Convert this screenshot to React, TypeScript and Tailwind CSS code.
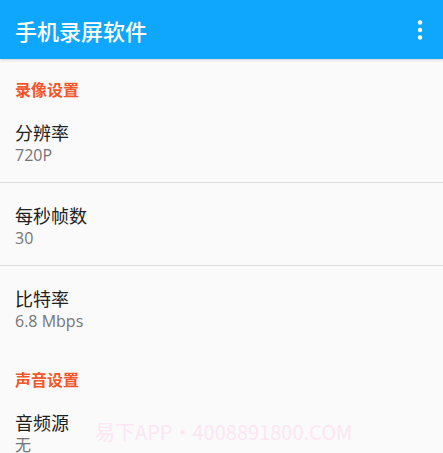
const font = { fontFamily: '"Noto Sans CJK SC", "Noto Sans", sans-serif' };
const valueFont = { fontFamily: '"Open Sans", "Noto Sans CJK SC", sans-serif' };

type Pref = { title: string; value: string; divider?: boolean };

const sections: { name: string; items: Pref[] }[] = [
  {
    name: "录像设置",
    items: [
      { title: "分辨率", value: "720P", divider: true },
      { title: "每秒帧数", value: "30", divider: true },
      { title: "比特率", value: "6.8 Mbps" },
    ],
  },
  {
    name: "声音设置",
    items: [{ title: "音频源", value: "无" }],
  },
];

function MoreIcon() {
  return (
    <svg width="6" height="20" viewBox="0 0 6 20" fill="white">
      <circle cx="3" cy="2.5" r="2.2" />
      <circle cx="3" cy="10" r="2.2" />
      <circle cx="3" cy="17.5" r="2.2" />
    </svg>
  );
}

export default function App() {
  return (
    <div
      className="relative h-[453px] w-[443px] overflow-hidden bg-[#fafafa]"
      style={font}
    >
      <header className="relative z-10 flex h-[59px] items-center justify-between bg-[#0fa6fe] pl-[15px] pr-[20px] shadow-[0_1px_3px_rgba(0,0,0,0.18)]">
        <h1 className="text-[22px] font-medium leading-none text-white">
          手机录屏软件
        </h1>
        <MoreIcon />
      </header>

      {sections.map((s) => (
        <section key={s.name}>
          <div className="h-[41px] pl-[15px] pt-[20px] text-[16px] font-bold leading-[20px] text-[#f4562a]">
            {s.name}
          </div>
          {s.items.map((p) => (
            <div
              key={p.title}
              className={`h-[83px] pl-[15px] pt-[20px] ${
                p.divider ? "border-b border-[#dddddd]" : ""
              }`}
            >
              <div className="text-[18px] leading-[24px] text-[#212121]">
                {p.title}
              </div>
              <div
                className="mt-[1px] text-[16px] leading-[20px] text-[#757575]"
                style={valueFont}
              >
                {p.value}
              </div>
            </div>
          ))}
        </section>
      ))}

      <div className="pointer-events-none absolute left-[95px] top-[420px] whitespace-nowrap text-[20px] leading-[24px] text-[#fde6f4]">
        易下APP・4008891800.COM
      </div>
    </div>
  );
}
